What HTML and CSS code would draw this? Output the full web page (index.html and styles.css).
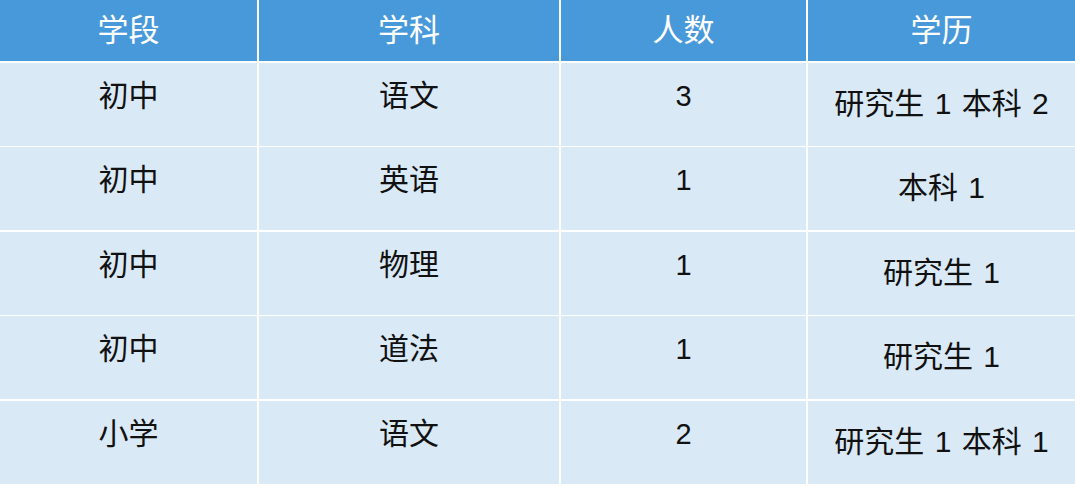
FILE: index.html
```html
<!DOCTYPE html>
<html lang="zh-CN">
<head>
<meta charset="utf-8">
<title>学段学科统计</title>
<link rel="stylesheet" href="styles.css">
</head>
<body>
<div class="table">
  <div class="cell head">学段</div>
  <div class="cell head">学科</div>
  <div class="cell head">人数</div>
  <div class="cell head">学历</div>

  <div class="cell">初中</div>
  <div class="cell">语文</div>
  <div class="cell num">3</div>
  <div class="cell edu">研究生 1 本科 2</div>

  <div class="cell">初中</div>
  <div class="cell">英语</div>
  <div class="cell num">1</div>
  <div class="cell edu">本科 1</div>

  <div class="cell">初中</div>
  <div class="cell">物理</div>
  <div class="cell num">1</div>
  <div class="cell edu">研究生 1</div>

  <div class="cell">初中</div>
  <div class="cell">道法</div>
  <div class="cell num">1</div>
  <div class="cell edu">研究生 1</div>

  <div class="cell">小学</div>
  <div class="cell">语文</div>
  <div class="cell num">2</div>
  <div class="cell edu">研究生 1 本科 1</div>
</div>
</body>
</html>
```

FILE: styles.css
```css
html, body {
  margin: 0;
  padding: 0;
  background: #ffffff;
}

body {
  width: 1075px;
  height: 487px;
  overflow: hidden;
  font-family: "Liberation Sans", "Noto Sans CJK SC", sans-serif;
}

.table {
  display: grid;
  grid-template-columns: 257px 300px 245px 267px;
  grid-template-rows: 61px repeat(5, 83px);
  column-gap: 2px;
  row-gap: 1.5px;
  background: #ffffff;
}

.cell {
  background: #dae9f6;
  color: #111111;
  font-size: 30px;
  line-height: 40px;
  padding-top: 13px;
  text-align: center;
  box-sizing: border-box;
}

.num {
  font-size: 29px;
}

.edu {
  font-size: 30px;
  padding-top: 21px;
  word-spacing: 2px;
}

.head {
  background: #4899da;
  color: #ffffff;
  font-size: 31px;
  padding-top: 0;
  display: flex;
  align-items: center;
  justify-content: center;
}
```
